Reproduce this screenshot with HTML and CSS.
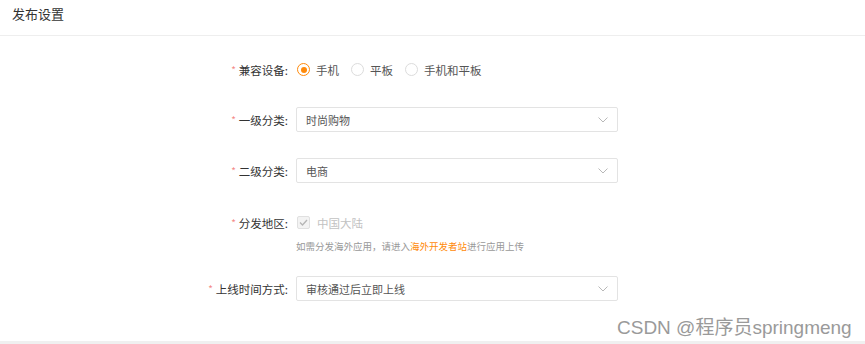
FILE: index.html
```html
<!DOCTYPE html>
<html lang="zh-CN">
<head>
  <meta charset="UTF-8">
  <meta name="viewport" content="width=device-width, initial-scale=1.0">
  <title>发布设置</title>
  <link rel="stylesheet" href="styles.css">
</head>
<body>
  <div class="card">
    <div class="card-header">发布设置</div>

    <div class="form">
      <div class="form-item item-radio">
        <label class="form-label"><span class="required">*</span>兼容设备:</label>
        <div class="form-control">
          <span class="radio checked"><span class="radio-dot"></span></span><span class="radio-text">手机</span>
          <span class="radio"></span><span class="radio-text">平板</span>
          <span class="radio"></span><span class="radio-text">手机和平板</span>
        </div>
      </div>

      <div class="form-item item-select1">
        <label class="form-label"><span class="required">*</span>一级分类:</label>
        <div class="select">
          <span>时尚购物</span>
          <svg class="arrow" width="10" height="6" viewBox="0 0 10 6"><path d="M0.5 0.5 L5 5 L9.5 0.5" fill="none" stroke="#b8b8b8" stroke-width="1"/></svg>
        </div>
      </div>

      <div class="form-item item-select2">
        <label class="form-label"><span class="required">*</span>二级分类:</label>
        <div class="select">
          <span>电商</span>
          <svg class="arrow" width="10" height="6" viewBox="0 0 10 6"><path d="M0.5 0.5 L5 5 L9.5 0.5" fill="none" stroke="#b8b8b8" stroke-width="1"/></svg>
        </div>
      </div>

      <div class="form-item item-check">
        <label class="form-label"><span class="required">*</span>分发地区:</label>
        <div class="form-control">
          <span class="checkbox">
            <svg width="9" height="7" viewBox="0 0 9 7"><path d="M1 3.5 L3.5 6 L8 1" fill="none" stroke="#b5b5b5" stroke-width="1.3"/></svg>
          </span><span class="check-text">中国大陆</span>
        </div>
      </div>
      <div class="help">如需分发海外应用，请进入<span class="link">海外开发者站</span>进行应用上传</div>

      <div class="form-item item-select3">
        <label class="form-label"><span class="required">*</span>上线时间方式:</label>
        <div class="select">
          <span>审核通过后立即上线</span>
          <svg class="arrow" width="10" height="6" viewBox="0 0 10 6"><path d="M0.5 0.5 L5 5 L9.5 0.5" fill="none" stroke="#b8b8b8" stroke-width="1"/></svg>
        </div>
      </div>
    </div>
  </div>

  <div class="watermark">CSDN @程序员springmeng</div>
</body>
</html>
```

FILE: styles.css
```css
body {
  margin: 0;
  background-color: #f0f0f0;
  font-family: "Noto Sans CJK SC", "Liberation Sans", sans-serif;
  color: #333;
}
.card {
  background-color: #fff;
  height: 341px;
}
.card-header {
  height: 35px;
  line-height: 28px;
  padding-left: 12px;
  font-size: 13px;
  color: #333;
  border-bottom: 1px solid #eeeeee;
}
.form {
  padding-top: 21px;
}
.form-item {
  display: flex;
  align-items: center;
  height: 25px;
}
.item-select1 {
  margin-top: 25px;
}
.item-select2 {
  margin-top: 26px;
}
.item-check {
  margin-top: 27px;
}
.item-select3 {
  margin-top: 23px;
}
.form-label {
  width: 288px;
  padding-right: 3px;
  text-align: right;
  font-size: 11.5px;
  color: #333;
  flex-shrink: 0;
  display: flex;
  justify-content: flex-end;
  align-items: center;
}
.required {
  color: #f48a8a;
  font-size: 10px;
  margin-right: 3px;
}
.form-control {
  display: flex;
  align-items: center;
  margin-left: 6px;
  font-size: 11.5px;
}
.radio {
  width: 11px;
  height: 11px;
  border: 1px solid #dcdcdc;
  border-radius: 50%;
  display: flex;
  align-items: center;
  justify-content: center;
}
.radio.checked {
  border-color: #ff8a0a;
}
.radio-dot {
  width: 6px;
  height: 6px;
  border-radius: 50%;
  background-color: #ff8a0a;
}
.radio-text {
  margin-left: 6px;
  margin-right: 12px;
  color: #555;
}
.checkbox {
  width: 11px;
  height: 11px;
  border: 1px solid #e0e0e0;
  border-radius: 2px;
  background-color: #f3f3f3;
  display: flex;
  align-items: center;
  justify-content: center;
}
.check-text {
  margin-left: 7px;
  color: #c2c2c2;
}
.help {
  margin-left: 296px;
  margin-top: 4px;
  font-size: 9.5px;
  line-height: 14px;
  color: #999;
}
.link {
  color: #ff8a0a;
}
.select {
  margin-left: 5px;
  height: 23px;
  border: 1px solid #e3e3e3;
  border-radius: 2px;
  display: flex;
  align-items: center;
  justify-content: space-between;
  padding: 0 9px 0 9px;
  box-sizing: content-box;
  width: 302px;
  font-size: 11px;
  color: #555;
}
.arrow {
  display: block;
}
.watermark {
  position: absolute;
  left: 617px;
  top: 312px;
  font-family: "Liberation Sans", "Noto Sans CJK SC", sans-serif;
  font-size: 19px;
  color: #9a9a9a;
  text-shadow: 0 0 2px #fff;
}
```
